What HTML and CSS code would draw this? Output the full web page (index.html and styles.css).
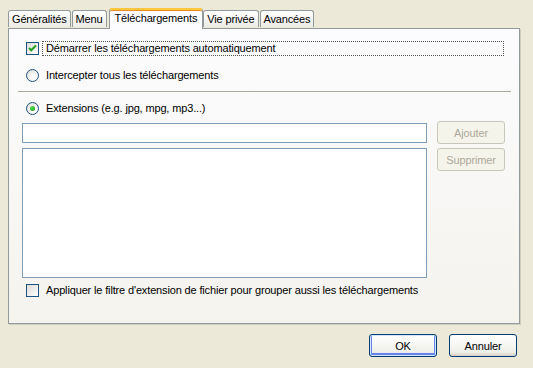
FILE: index.html
```html
<!DOCTYPE html>
<html lang="fr">
<head>
    <meta charset="UTF-8">
    <title>Options - Téléchargements</title>
    <link rel="stylesheet" href="styles.css">
</head>
<body>
    <div class="dialog">
        <!-- Tab strip -->
        <div class="tabs">
            <div class="tab">Généralités</div>
            <div class="tab">Menu</div>
            <div class="tab active">Téléchargements</div>
            <div class="tab">Vie privée</div>
            <div class="tab">Avancées</div>
        </div>

        <!-- Tab page -->
        <div class="panel">
            <label class="option first">
                <span class="check">
                    <svg width="11" height="11" viewBox="0 0 11 11"><path d="M2 5 L4.2 7.3 L9 2.5" fill="none" stroke="#21a121" stroke-width="2"/></svg>
                </span>
                <span class="caption focus">Démarrer les téléchargements automatiquement</span>
            </label>

            <label class="option second">
                <span class="radio"></span>
                <span class="caption">Intercepter tous les téléchargements</span>
            </label>

            <div class="sep"></div>

            <label class="option third">
                <span class="radio on"></span>
                <span class="caption">Extensions (e.g. jpg, mpg, mp3...)</span>
            </label>

            <div class="ext">
                <div class="fields">
                    <div class="textbox"></div>
                    <div class="listbox"></div>
                </div>
                <div class="side">
                    <button class="btn" disabled>Ajouter</button>
                    <button class="btn" disabled>Supprimer</button>
                </div>
            </div>

            <label class="option last">
                <span class="check"></span>
                <span class="caption">Appliquer le filtre d'extension de fichier pour grouper aussi les téléchargements</span>
            </label>
        </div>

        <!-- Dialog buttons -->
        <div class="footer">
            <button class="btn default">OK</button>
            <button class="btn">Annuler</button>
        </div>
    </div>
</body>
</html>
```

FILE: styles.css
```css
body {
    margin: 0;
    background-color: #ece9d8;
    font-family: "Liberation Sans", Arial, sans-serif;
    font-size: 11px;
    letter-spacing: -0.15px;
    color: #000;
}

.dialog {
    width: 533px;
    height: 368px;
    overflow: hidden;
}

/* Tabs */
.tabs {
    display: flex;
    align-items: flex-end;
    height: 20px;
    padding: 8px 0 0 8px;
    gap: 1px;
    position: relative;
    z-index: 1;
}

.tab {
    height: 16px;
    line-height: 16px;
    padding: 0 3px;
    border: 1px solid #919b9c;
    border-bottom: none;
    border-radius: 3px 3px 0 0;
    background: linear-gradient(#ffffff, #ecebe6);
    margin-bottom: 1px;
}

.tab.active {
    height: 19px;
    line-height: 16px;
    padding: 0 5px;
    margin: 0 -1px -1px 1px;
    background: #fcfcfe;
    border-top: 2px solid #ffc83c;
    box-shadow: inset 0 1px 0 #e68b2c;
}

/* Tab page */
.panel {
    height: 294px;
    width: 493px;
    margin-left: 8px;
    padding: 0 8px 0 9px;
    border: 1px solid #919b9c;
    background: linear-gradient(#fcfcfe, #f4f3ee);
    box-shadow: 1px 1px 0 #d0cebf;
    display: flex;
    flex-direction: column;
}

.option {
    display: flex;
    align-items: center;
    height: 15px;
    padding-left: 8px;
}

.option.first { margin-top: 12px; }
.option.second { margin-top: 12px; }
.option.third { margin-top: 9px; }
.option.last { margin-top: 5px; }

.caption {
    margin-left: 3px;
    padding: 0 3px;
    height: 13px;
    line-height: 13px;
    border: 1px solid transparent;
    white-space: nowrap;
}

.caption.focus {
    flex: 1;
    margin-right: 7px;
    border: 1px dotted #555;
}

.check {
    width: 11px;
    height: 11px;
    border: 1px solid #1c5180;
    background: linear-gradient(135deg, #dcdbd5, #ffffff);
    display: flex;
}

.radio {
    width: 13px;
    height: 13px;
    box-sizing: border-box;
    border: 1px solid #1c5180;
    border-radius: 50%;
    background: radial-gradient(circle at 70% 70%, #ffffff 20%, #dcdbd5 90%);
    display: flex;
    align-items: center;
    justify-content: center;
}

.radio.on::after {
    content: "";
    width: 5px;
    height: 5px;
    border-radius: 50%;
    background: radial-gradient(circle at 35% 35%, #55d751, #1a9e15);
}

.sep {
    height: 1px;
    margin-top: 8px;
    background-color: #aca899;
}

/* Extension list */
.ext {
    display: flex;
    gap: 10px;
    margin: 5px 6px 0 4px;
}

.fields {
    flex: 1;
    display: flex;
    flex-direction: column;
    gap: 5px;
    padding-top: 2px;
}

.textbox {
    height: 18px;
    border: 1px solid #7f9db9;
    background-color: #fff;
}

.listbox {
    height: 128px;
    border: 1px solid #7f9db9;
    background-color: #fff;
}

.side {
    display: flex;
    flex-direction: column;
    gap: 4px;
}

/* Buttons */
.btn {
    width: 68px;
    height: 23px;
    padding: 0;
    font-family: inherit;
    font-size: 11px;
    letter-spacing: inherit;
    color: #000;
    border: 1px solid #003c74;
    border-radius: 3px;
    background: linear-gradient(#ffffff, #f0f0ea 80%, #d6d0c5);
}

.btn:disabled {
    color: #aca899;
    border-color: #c9c7ba;
    background: #f5f4ea;
}

.btn.default {
    box-shadow: inset 0 0 0 1px #cee7ff, inset 0 -1px 0 2px #6982ee;
}

.footer {
    display: flex;
    justify-content: flex-end;
    gap: 12px;
    padding: 10px 16px 0 0;
}
```
